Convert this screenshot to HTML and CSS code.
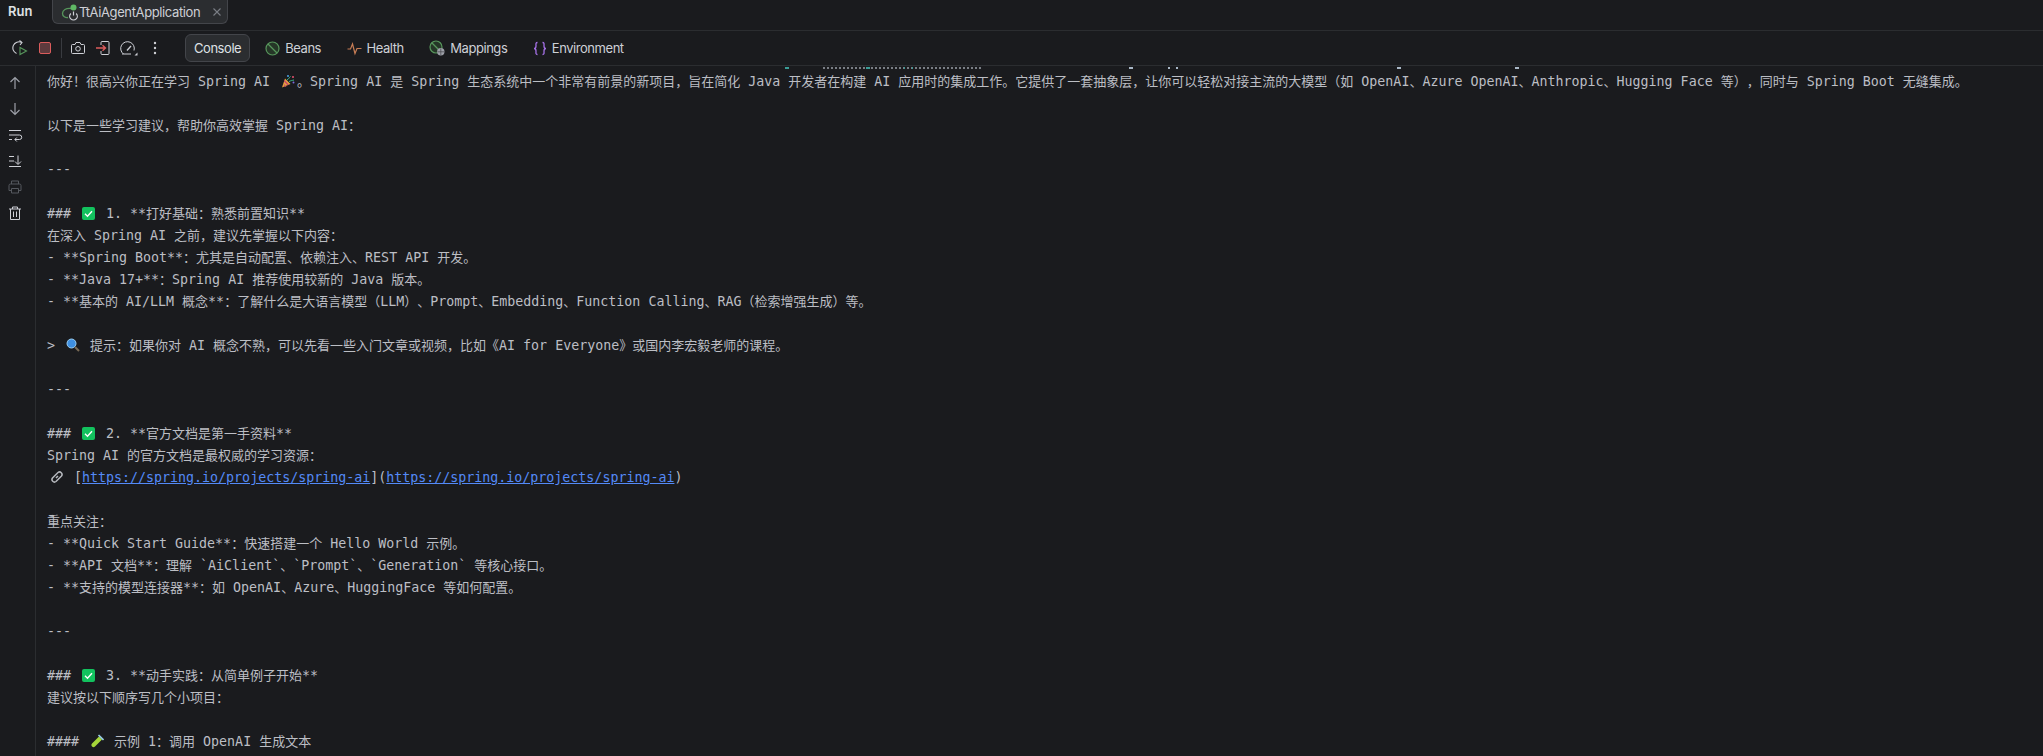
FILE: index.html
```html
<!DOCTYPE html>
<html lang="zh-CN">
<head>
<meta charset="utf-8">
<title>Run</title>
<link rel="stylesheet" href="styles.css">
</head>
<body>
<svg class="defs" width="0" height="0" aria-hidden="true">
  <symbol id="check" viewBox="0 0 13 13">
    <rect width="13" height="13" rx="2" fill="#12c25e"/>
    <path d="M3 6.8 5.5 9.2 10 4.2" fill="none" stroke="#fff" stroke-width="1.4"/>
  </symbol>
</svg>
<header class="titlebar">
  <span class="run-label">Run</span>
  <div class="run-tab">
    <svg class="ico-app" width="20" height="18" viewBox="0 0 20 18"><path d="M10 5.500C5 5 1.500 7 1.500 10.500 1.500 13.500 4.500 15 7 14.500" fill="none" stroke="#57965c" stroke-width="1.300"/><circle cx="12.500" cy="4.500" r="3" fill="#5fb865"/><path d="M12.500 8.500v4" stroke="#ced0d6" stroke-width="1.200"/><path d="M9.800 10.500a3.800 3.800 0 1 0 5.400 0" fill="none" stroke="#ced0d6" stroke-width="1.200"/></svg>
    <span class="tab-name">TtAiAgentApplication</span>
    <svg class="ico-close" width="10" height="10" viewBox="0 0 10 10"><path d="M1.500 1.500 8.500 8.500M8.500 1.500 1.500 8.500" stroke="#7a7e85" stroke-width="1.100"/></svg>
  </div>
</header>
<nav class="toolbar">
  <svg class="ico" width="16" height="16" viewBox="0 0 16 16"><path d="M9.500 2.300A6 6 0 1 0 4.500 13.500" fill="none" stroke="#ced0d6" stroke-width="1.100"/><path d="M7.500 .5 10 2.500 8 5" fill="none" stroke="#ced0d6" stroke-width="1.100"/><path d="M8 7.500v7l6.500-3.500z" fill="none" stroke="#57965c" stroke-width="1.100"/></svg>
  <svg class="ico" width="16" height="16" viewBox="0 0 16 16"><rect x="2.500" y="2.500" width="11" height="11" rx="1.500" fill="#5e3a3d" stroke="#db5c5c"/></svg>
  <span class="divider"></span>
  <svg class="ico" width="16" height="16" viewBox="0 0 16 16"><path d="M1.500 5.500a1 1 0 0 1 1-1h2.500l1-2h4l1 2h2.500a1 1 0 0 1 1 1v7a1 1 0 0 1-1 1h-11a1 1 0 0 1-1-1z" fill="none" stroke="#ced0d6"/><circle cx="8" cy="8.800" r="2.300" fill="none" stroke="#ced0d6"/></svg>
  <svg class="ico" width="16" height="16" viewBox="0 0 16 16"><path d="M6 5V2.500a1 1 0 0 1 1-1h6a1 1 0 0 1 1 1v11a1 1 0 0 1-1 1H7a1 1 0 0 1-1-1V11" fill="none" stroke="#ced0d6"/><path d="M1 8h9M7.500 5.200 10.500 8l-3 2.800" fill="none" stroke="#db5c5c" stroke-width="1.400"/></svg>
  <svg class="ico-wide" width="18" height="16" viewBox="0 0 18 16"><path d="M3.500 14A6.800 6.800 0 1 1 14 10.500" fill="none" stroke="#ced0d6"/><path d="M2 14h9" stroke="#ced0d6"/><path d="M7 10.500 11 6" stroke="#ced0d6" stroke-width="1.300"/><path d="M17.500 12.500v3h-3z" fill="#ced0d6"/></svg>
  <svg class="ico" width="16" height="16" viewBox="0 0 16 16"><circle cx="8" cy="3" r="1.200" fill="#ced0d6"/><circle cx="8" cy="8" r="1.200" fill="#ced0d6"/><circle cx="8" cy="13" r="1.200" fill="#ced0d6"/></svg>
  <div class="tabs">
    <span class="pill">Console</span>
    <span class="tab"><svg class="ico" width="15" height="15" viewBox="0 0 15 15"><circle cx="7.500" cy="7.500" r="6.500" fill="#253627" stroke="#57965c" stroke-width="1.200"/><path d="M3 3 12 12" stroke="#57965c" stroke-width="1.200"/></svg>Beans</span>
    <span class="tab"><svg class="ico" width="15" height="15" viewBox="0 0 15 15"><path d="M.5 8H3.500L5.500 3 8 12.500 10 7.500H14.500" fill="none" stroke="#c77d55" stroke-width="1.200"/></svg>Health</span>
    <span class="tab"><svg class="ico" width="16" height="16" viewBox="0 0 16 16"><circle cx="7" cy="7" r="6" fill="#253627" stroke="#57965c" stroke-width="1.200"/><path d="M3 3 11 11" stroke="#57965c" stroke-width="1.200"/><circle cx="11.800" cy="11.800" r="3.700" fill="#9da0a8"/><path d="M8.500 11.800h6.500M11.800 8.500v6.500" stroke="#43454a" stroke-width=".7"/></svg>Mappings</span>
    <span class="tab"><svg class="ico" width="14" height="15" viewBox="0 0 14 15"><path d="M4.500 1.500C2.500 1.500 3 3 3 5 3 6.500 2.500 7.500 1 7.500 2.500 7.500 3 8.500 3 10 3 12 2.500 13.500 4.500 13.500M9.500 1.500C11.500 1.500 11 3 11 5 11 6.500 11.500 7.500 13 7.500 11.500 7.500 11 8.500 11 10 11 12 11.500 13.500 9.500 13.500" fill="none" stroke="#a571e6" stroke-width="1.300"/></svg>Environment</span>
  </div>
</nav>
<div class="body">
  <aside class="sidebar">
    <svg class="ico" width="16" height="16" viewBox="0 0 16 16"><path d="M8 14V2.500M3.500 7 8 2.500 12.500 7" fill="none" stroke="#9da0a8" stroke-width="1.200"/></svg>
    <svg class="ico" width="16" height="16" viewBox="0 0 16 16"><path d="M8 2v11.500M3.500 9 8 13.500 12.500 9" fill="none" stroke="#9da0a8" stroke-width="1.200"/></svg>
    <svg class="ico" width="16" height="16" viewBox="0 0 16 16"><path d="M2 3.500h12M2 8h10.500a2 2 0 0 1 0 4.500H8M2 12.500h3M9.800 10.500 7.800 12.500l2 2" fill="none" stroke="#ced0d6"/></svg>
    <svg class="ico" width="16" height="16" viewBox="0 0 16 16"><path d="M2 3.500h5M2 8h5M2 13.500h12M11 2.500v8.500M8 8.500l3 3 3-3" fill="none" stroke="#ced0d6"/></svg>
    <svg class="ico" width="16" height="16" viewBox="0 0 16 16"><path d="M4.500 5V2h7v3M4.500 11.500H2V6.500a1.500 1.500 0 0 1 1.500-1.500h9A1.500 1.500 0 0 1 14 6.500v5h-2.500M4.500 9.500h7V14h-7z" fill="none" stroke="#55585e"/></svg>
    <svg class="ico" width="16" height="16" viewBox="0 0 16 16"><path d="M2 4h12M5.500 4V2h5v2M3.500 4v10.500h9V4M6.500 6.500v5.500M9.500 6.500v5.500" fill="none" stroke="#ced0d6"/></svg>
  </aside>
  <main class="console">
    <div class="tails">
      <span class="tail tail-a"></span>
      <span class="tail tail-dots"></span>
      <span class="tail tail-b"></span>
      <span class="tail tail-c"></span>
      <span class="tail tail-d"></span>
      <span class="tail tail-e"></span>
      <span class="tail tail-f"></span>
    </div>
    <div class="line">你好！很高兴你正在学习<span class="en"> Spring AI </span><svg class="emoji emoji-lg" width="14" height="14" viewBox="0 0 14 14"><path d="M1 13.500 4 4.500 9.500 10z" fill="#e8a33d"/><path d="M2.500 9.500 5.500 12.500 3.800 13zM3.500 6 8 10.500 6.500 11.200 3 7.500z" fill="#c7486b"/><circle cx="7" cy="2" r="1" fill="#4aa3e8"/><circle cx="12" cy="3" r="1" fill="#e8536f"/><circle cx="12.500" cy="8.500" r="1" fill="#7d6be0"/><path d="M6 6C8 5 8 3.500 9.500 2.500M8 7.500C10 6.500 11 6.500 13 6" fill="none" stroke="#3fbf8f" stroke-width="1"/></svg>。<span class="en">Spring AI </span>是<span class="en"> Spring </span>生态系统中一个非常有前景的新项目，旨在简化<span class="en"> Java </span>开发者在构建<span class="en"> AI </span>应用时的集成工作。它提供了一套抽象层，让你可以轻松对接主流的大模型（如<span class="en"> OpenAI</span>、<span class="en">Azure OpenAI</span>、<span class="en">Anthropic</span>、<span class="en">Hugging Face </span>等），同时与<span class="en"> Spring Boot </span>无缝集成。</div>
    <div class="line"></div>
    <div class="line">以下是一些学习建议，帮助你高效掌握<span class="en"> Spring AI</span>：</div>
    <div class="line"></div>
    <div class="line"><span class="en">---</span></div>
    <div class="line"></div>
    <div class="line"><span class="en">### </span><svg class="emoji" width="13" height="13"><use href="#check"/></svg><span class="en"> 1. **</span>打好基础：熟悉前置知识<span class="en">**</span></div>
    <div class="line">在深入<span class="en"> Spring AI </span>之前，建议先掌握以下内容：</div>
    <div class="line"><span class="en">- **Spring Boot**</span>：尤其是自动配置、依赖注入、<span class="en">REST API </span>开发。</div>
    <div class="line"><span class="en">- **Java 17+**</span>：<span class="en">Spring AI </span>推荐使用较新的<span class="en"> Java </span>版本。</div>
    <div class="line"><span class="en">- **</span>基本的<span class="en"> AI/LLM </span>概念<span class="en">**</span>：了解什么是大语言模型（<span class="en">LLM</span>）、<span class="en">Prompt</span>、<span class="en">Embedding</span>、<span class="en">Function Calling</span>、<span class="en">RAG</span>（检索增强生成）等。</div>
    <div class="line"></div>
    <div class="line"><span class="en">&gt; </span><svg class="emoji emoji-lg" width="14" height="14" viewBox="0 0 14 14"><circle cx="5.500" cy="5.500" r="4.500" fill="#3f8fe0" stroke="#9ad0f5"/><path d="M9 9 13 13" stroke="#7a6a55" stroke-width="2"/></svg><span class="en"> </span>提示：如果你对<span class="en"> AI </span>概念不熟，可以先看一些入门文章或视频，比如《<span class="en">AI for Everyone</span>》或国内李宏毅老师的课程。</div>
    <div class="line"></div>
    <div class="line"><span class="en">---</span></div>
    <div class="line"></div>
    <div class="line"><span class="en">### </span><svg class="emoji" width="13" height="13"><use href="#check"/></svg><span class="en"> 2. **</span>官方文档是第一手资料<span class="en">**</span></div>
    <div class="line"><span class="en">Spring AI </span>的官方文档是最权威的学习资源：</div>
    <div class="line"><svg class="emoji emoji-lg" width="14" height="14" viewBox="0 0 14 14"><path d="M6 8 8 6M5.500 5 2.500 8a2.500 2.500 0 0 0 3.500 3.500l3-3M8.500 9l3-3A2.500 2.500 0 0 0 8 2.500l-3 3" fill="none" stroke="#b5b8bd" stroke-width="1.500"/></svg><span class="en"> [<a class="link" href="#">https://spring.io/projects/spring-ai</a>](<a class="link" href="#">https://spring.io/projects/spring-ai</a>)</span></div>
    <div class="line"></div>
    <div class="line">重点关注：</div>
    <div class="line"><span class="en">- **Quick Start Guide**</span>：快速搭建一个<span class="en"> Hello World </span>示例。</div>
    <div class="line"><span class="en">- **API </span>文档<span class="en">**</span>：理解<span class="en"> `AiClient`</span>、<span class="en">`Prompt`</span>、<span class="en">`Generation` </span>等核心接口。</div>
    <div class="line"><span class="en">- **</span>支持的模型连接器<span class="en">**</span>：如<span class="en"> OpenAI</span>、<span class="en">Azure</span>、<span class="en">HuggingFace </span>等如何配置。</div>
    <div class="line"></div>
    <div class="line"><span class="en">---</span></div>
    <div class="line"></div>
    <div class="line"><span class="en">### </span><svg class="emoji" width="13" height="13"><use href="#check"/></svg><span class="en"> 3. **</span>动手实践：从简单例子开始<span class="en">**</span></div>
    <div class="line">建议按以下顺序写几个小项目：</div>
    <div class="line"></div>
    <div class="line"><span class="en">#### </span><svg class="emoji emoji-lg" width="14" height="14" viewBox="0 0 14 14"><path d="M9 2.500 12 5.500 5 12.500a2.100 2.100 0 0 1-3-3z" fill="#a6d63a"/><path d="M8.500 1 13.500 6" stroke="#9ad0e8" stroke-width="1.600"/></svg><span class="en"> </span>示例<span class="en"> 1</span>：调用<span class="en"> OpenAI </span>生成文本</div>
  </main>
</div>
</body>
</html>
```
FILE: styles.css
```css
* { box-sizing: border-box; }
html, body { margin: 0; height: 100%; }
body {
  display: flex;
  flex-direction: column;
  overflow: hidden;
  background: #1a1b1e;
  color: #bcbec4;
  font-family: Inter, "Noto Sans", sans-serif;
  font-size: 13px;
}
.defs { position: absolute; }
svg { display: block; flex: none; }

.titlebar {
  display: flex;
  flex: none;
  align-items: flex-start;
  height: 31px;
  border-bottom: 1px solid #2b2d30;
}
.run-label {
  width: 52px;
  padding: 2px 0 0 8px;
  line-height: 18px;
  font-weight: 600;
  color: #dfe1e5;
}
.run-tab {
  display: flex;
  align-items: center;
  width: 176px;
  height: 24px;
  padding: 0 5px 0 8px;
  background: #2b2d30;
  border: 1px solid #43454a;
  border-top: 0;
  border-radius: 0 0 6px 6px;
  color: #ced0d6;
  letter-spacing: -.38px;
}
.ico-app { margin-right: -2px; }
.tab-name { flex: 1; }

.toolbar {
  display: flex;
  flex: none;
  align-items: center;
  gap: 9px;
  height: 35px;
  padding-left: 12px;
  border-bottom: 1px solid #2b2d30;
}
.divider {
  width: 1px;
  height: 20px;
  margin: 0 -1px;
  background: #393b40;
}
.tabs {
  display: flex;
  align-items: center;
  gap: 25.5px;
  margin-left: 13px;
  letter-spacing: -.45px;
}
.pill {
  margin-right: -10.5px;
  padding: 0 8px;
  line-height: 26px;
  background: #2b2d30;
  border: 1px solid #43454a;
  border-radius: 6px;
  color: #dfe1e5;
}
.tab {
  display: flex;
  align-items: center;
  gap: 5px;
  color: #ced0d6;
}

.body {
  display: flex;
  flex: 1;
  min-height: 0;
}
.sidebar {
  display: flex;
  flex: none;
  flex-direction: column;
  align-items: center;
  gap: 10px;
  width: 36px;
  padding: 9px 5px 0 0;
  border-right: 1px solid #2b2d30;
}
.console {
  flex: 1;
  min-width: 0;
  overflow: hidden;
  padding-left: 11px;
  font-family: "DejaVu Sans Mono", "Noto Sans CJK SC", monospace;
  font-size: 13px;
  text-spacing-trim: space-all;
}
.tails {
  display: flex;
  height: 5px;
  padding-top: 1px;
}
.tail { height: 2px; background: #a9b7c6; }
.tail-a { width: 4px; margin-left: 738px; background: #3a9c96; }
.tail-dots {
  width: 158px;
  margin-left: 34px;
  background:
    linear-gradient(#3a9c96, #3a9c96) 43px 0 / 4px 2px no-repeat,
    linear-gradient(#3a9c96, #3a9c96) 81px 0 / 1px 2px no-repeat,
    linear-gradient(#3a9c96, #3a9c96) 89px 0 / 1px 2px no-repeat,
    repeating-linear-gradient(90deg, #7a7e85 0 2px, transparent 2px 4px);
}
.tail-b { width: 4px; margin-left: 148px; }
.tail-c { width: 2px; margin-left: 35px; }
.tail-d { width: 2px; margin-left: 6px; }
.tail-e { width: 4px; margin-left: 219px; }
.tail-f { width: 4px; margin-left: 114px; }
.line {
  height: 22px;
  line-height: 22px;
  white-space: pre;
}
.en { font-size: 13.3px; }
.emoji {
  display: inline-block;
  box-sizing: content-box;
  padding: 0 3px;
  vertical-align: -2px;
}
.emoji-lg { padding-right: 2px; }
.link { color: #548af7; text-decoration: underline; }
```
